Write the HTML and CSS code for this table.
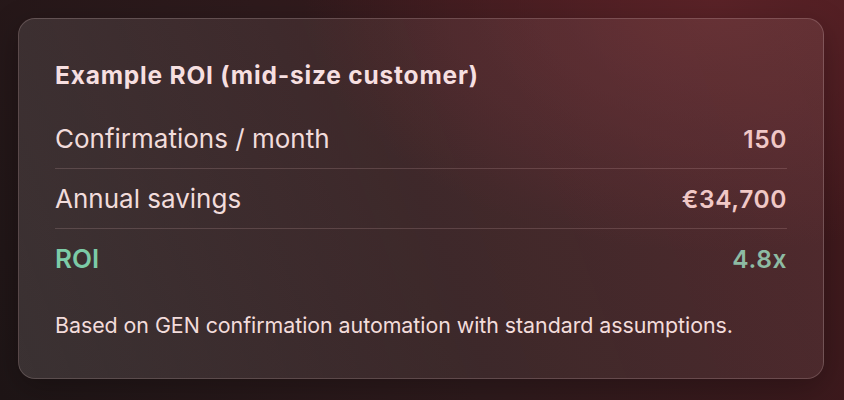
FILE: index.html
```html
<!DOCTYPE html>
<html lang="en">
<head>
<meta charset="utf-8">
<title>Example ROI</title>
<link rel="stylesheet" href="styles.css">
</head>
<body>
<div class="page">
  <section class="card">
    <h2 class="title">Example ROI (mid-size customer)</h2>
    <div class="rows">
      <div class="row">
        <span class="label">Confirmations / month</span>
        <span class="value">150</span>
      </div>
      <div class="row">
        <span class="label">Annual savings</span>
        <span class="value">€34,700</span>
      </div>
      <div class="row row-roi">
        <span class="label">ROI</span>
        <span class="value">4.8x</span>
      </div>
    </div>
    <p class="note">Based on GEN confirmation automation with standard assumptions.</p>
  </section>
</div>
</body>
</html>
```
FILE: styles.css
```css
html, body {
  margin: 0;
  padding: 0;
}
body {
  width: 844px;
  height: 400px;
  overflow: hidden;
  font-family: Inter, "Noto Sans", sans-serif;
  background:
    radial-gradient(ellipse 70% 90% at 85% 0%, #5a2227 0%, rgba(80,30,34,0) 70%),
    linear-gradient(60deg, #1e1516 0%, #2e1a1c 45%, #45191d 100%);
}
.page {
  padding: 18px 20px 21px 18px;
  box-sizing: border-box;
  height: 400px;
}
.card {
  box-sizing: border-box;
  height: 361px;
  border: 1px solid rgba(255, 225, 225, 0.18);
  border-radius: 17px;
  background:
    linear-gradient(70deg, rgba(255,255,255,0.12) 0%, rgba(255,230,230,0.07) 50%, rgba(255,220,220,0.09) 100%);
  box-shadow: 0 8px 30px rgba(0,0,0,0.25);
  padding: 40px 36px 0 36px;
  display: flex;
  flex-direction: column;
}
.title {
  margin: 0;
  font-size: 24.5px;
  line-height: 32px;
  font-weight: 700;
  color: #f6dfe0;
  letter-spacing: 0.8px;
}
.rows {
  margin-top: 18px;
  display: flex;
  flex-direction: column;
}
.row {
  display: flex;
  justify-content: space-between;
  align-items: center;
  height: 59px;
  border-bottom: 1px solid rgba(255, 210, 210, 0.16);
}
.row:last-child {
  border-bottom: none;
}
.label {
  font-size: 26px;
  font-weight: 400;
  color: #f1dcdb;
  letter-spacing: 0;
}
.value {
  font-size: 24.5px;
  font-weight: 600;
  color: #f0c8c6;
  letter-spacing: 0.6px;
}
.row-roi .label {
  color: #7ccba7;
  font-weight: 600;
}
.row-roi .value {
  color: #8dbba3;
}
.note {
  margin: 23px 0 0 0;
  font-size: 21.4px;
  line-height: 28px;
  color: #f3dcdb;
  letter-spacing: -0.05px;
}
```
